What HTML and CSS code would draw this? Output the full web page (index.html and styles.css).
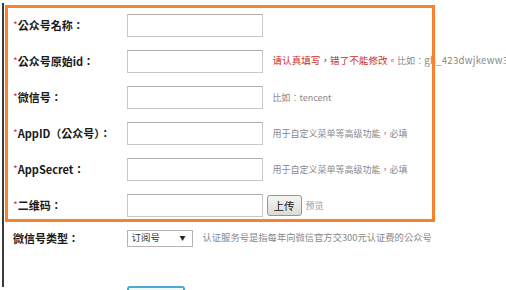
FILE: index.html
```html
<!DOCTYPE html>
<html lang="zh-Hant">
<head>
<meta charset="utf-8">
<title>公众号设置</title>
<link rel="stylesheet" href="styles.css">
</head>
<body>
<div class="page">
  <div class="frame">
    <form class="form">
      <div class="row">
        <label class="label"><span class="req">*</span>公众号名称：</label>
        <input class="field" type="text">
      </div>
      <div class="row">
        <label class="label"><span class="req">*</span>公众号原始id：</label>
        <input class="field" type="text">
        <span class="hint"><span class="warn">请认真填写，错了不能修改。</span>比如：<span class="example">gh_423dwjkeww3</span></span>
      </div>
      <div class="row">
        <label class="label"><span class="req">*</span>微信号：</label>
        <input class="field" type="text">
        <span class="hint">比如：tencent</span>
      </div>
      <div class="row">
        <label class="label"><span class="req">*</span>AppID（公众号）：</label>
        <input class="field" type="text">
        <span class="hint">用于自定义菜单等高级功能，必填</span>
      </div>
      <div class="row">
        <label class="label"><span class="req">*</span>AppSecret：</label>
        <input class="field" type="text">
        <span class="hint">用于自定义菜单等高级功能，必填</span>
      </div>
      <div class="row">
        <label class="label"><span class="req">*</span>二维码：</label>
        <input class="field" type="text">
        <button class="upload" type="button">上传</button>
        <span class="preview">预览</span>
      </div>
      <div class="row row-type">
        <label class="label">微信号类型：</label>
        <div class="select"><span>订阅号</span><span class="arrow">▼</span></div>
        <span class="hint hint-type">认证服务号是指每年向微信官方交300元认证费的公众号</span>
      </div>
      <div class="actions">
        <div class="submit"></div>
      </div>
    </form>
  </div>
  <div class="highlight"></div>
</div>
</body>
</html>
```
FILE: styles.css
```css
html, body {
  margin: 0;
  padding: 0;
  background: #ffffff;
}
body {
  font-family: "Noto Sans CJK TC", "Noto Sans CJK SC", sans-serif;
  color: #222;
}
.page {
  position: relative;
  width: 506px;
  height: 290px;
  overflow: hidden;
}
.frame {
  margin: 3px 0 0 2px;
  border-left: 2.5px solid #3a3a3a;
  height: 284px;
}
.form {
  padding-top: 4px;
  display: flex;
  flex-direction: column;
}
.row {
  display: flex;
  align-items: center;
  height: 36px;
  white-space: nowrap;
}
.label {
  flex-shrink: 0;
  width: 113.5px;
  padding-left: 9px;
  font-size: 11px;
  font-weight: 700;
  color: #1a1a1a;
  line-height: 1;
}
.req {
  color: #cc3b3b;
  font-weight: 400;
  font-size: 10px;
  position: relative;
  top: -1px;
}
.field {
  flex-shrink: 0;
  box-sizing: border-box;
  width: 136px;
  height: 23px;
  margin: 0;
  border: 1px solid #c8c8c8;
  border-top-color: #b0b0b0;
  background: #fff;
  padding: 0 4px;
}
.hint {
  flex-shrink: 0;
  margin-left: 10px;
  font-size: 9px;
  color: #888;
  line-height: 1;
}
.warn {
  color: #c9302c;
  font-size: 9.6px;
}
.example {
  font-size: 9.6px;
  letter-spacing: 0.3px;
}
.upload {
  flex-shrink: 0;
  box-sizing: border-box;
  margin: 0 0 0 4px;
  width: 35px;
  height: 21px;
  padding: 0;
  font-family: "Noto Sans CJK TC", "Noto Sans CJK SC", sans-serif;
  font-size: 10.5px;
  color: #111;
  background: linear-gradient(#f6f6f2, #dcdcd6);
  border: 1px solid #8f9c86;
  border-radius: 3px;
}
.preview {
  margin-left: 4px;
  font-size: 9px;
  color: #999;
}
.row-type {
  height: 30px;
}
.select {
  flex-shrink: 0;
  box-sizing: border-box;
  width: 66px;
  height: 17px;
  border: 1px solid #b4b4b4;
  display: flex;
  align-items: center;
  justify-content: space-between;
  padding: 0 6px 0 4px;
  font-size: 9.5px;
  color: #333;
  line-height: 1;
}
.arrow {
  font-size: 6px;
  color: #222;
}
.hint-type {
  font-size: 9.3px;
}
.actions {
  margin-top: 33px;
  padding-left: 123px;
}
.submit {
  width: 54px;
  height: 22px;
  border: 2px solid #4da8d8;
  border-radius: 3px;
  background: #eef7fc;
}
.highlight {
  position: absolute;
  left: 5px;
  top: 5px;
  width: 430px;
  height: 217px;
  box-sizing: border-box;
  border: 3.5px solid #f7832e;
  pointer-events: none;
}
```
